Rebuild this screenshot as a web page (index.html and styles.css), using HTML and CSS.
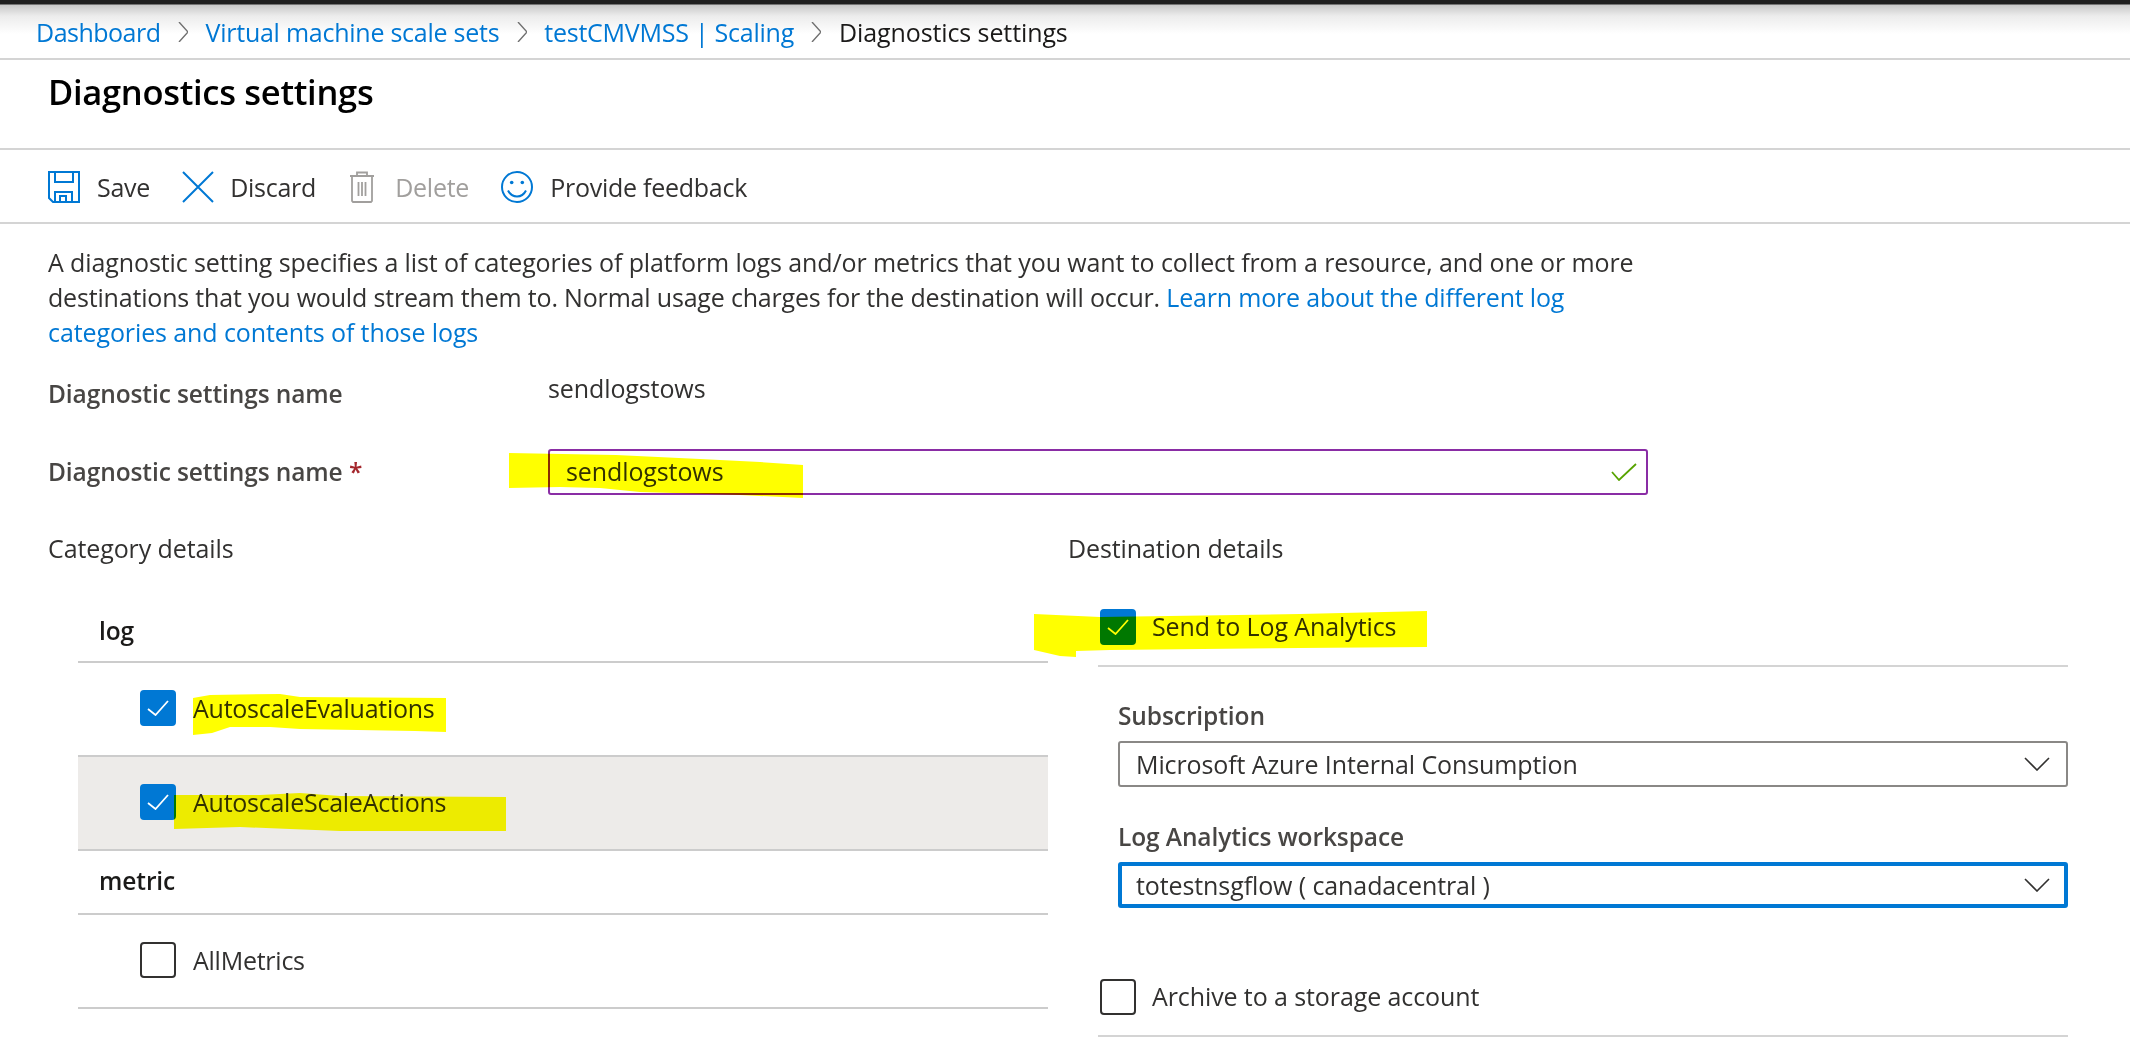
FILE: index.html
```html
<!DOCTYPE html>
<html lang="en">
<head>
    <meta charset="UTF-8">
    <meta name="viewport" content="width=device-width, initial-scale=1.0">
    <title>Diagnostics settings</title>
    <link rel="stylesheet" href="styles.css">
</head>
<body>
    <div class="breadcrumb">
        <a class="crumb c1">Dashboard</a>
        <svg class="crumb-sep" viewBox="0 0 10 20"><path d="M1 0l9 10-9 10"/></svg>
        <a class="crumb c2">Virtual machine scale sets</a>
        <svg class="crumb-sep" viewBox="0 0 10 20"><path d="M1 0l9 10-9 10"/></svg>
        <a class="crumb c3">testCMVMSS | Scaling</a>
        <svg class="crumb-sep" viewBox="0 0 10 20"><path d="M1 0l9 10-9 10"/></svg>
        <span class="crumb current">Diagnostics settings</span>
    </div>

    <div class="title-bar">
        <h1>Diagnostics settings</h1>
    </div>

    <div class="toolbar">
        <div class="tool tool-save">
            <svg class="icon" viewBox="0 0 32 32"><path d="M1 1h30v30H5l-4-4z"/><path d="M7 1v10h18V1"/><path d="M7 31V21h17v10M12 31v-6h6v6"/></svg>
            <span>Save</span>
        </div>
        <div class="tool tool-discard">
            <svg class="icon" viewBox="0 0 32 32"><path d="M1 1l30 30M31 1L1 31"/></svg>
            <span>Discard</span>
        </div>
        <div class="tool tool-delete disabled">
            <svg class="icon icon-trash" viewBox="0 0 26 32"><path d="M1 5h24M8 5V1.500h10V5M3 5v25l1 1h18l1-1V5M9.500 11v14M13 11v14M16.500 11v14"/></svg>
            <span>Delete</span>
        </div>
        <div class="tool">
            <svg class="icon" viewBox="0 0 32 32"><circle cx="16" cy="16" r="15"/><circle class="eye" cx="10.700" cy="11.500" r="1.800"/><circle class="eye" cx="21.300" cy="11.500" r="1.800"/><path d="M7 19.500c4 8 14 8 18 0"/></svg>
            <span>Provide feedback</span>
        </div>
    </div>

    <div class="content">
        <p class="intro">
            A diagnostic setting specifies a list of categories of platform logs and/or metrics that you want to collect from a resource, and one or more<br>
            <span class="tight">destinations that you would stream them to. Normal usage charges for the destination will occur. <a>Learn more about the different log</a></span><br>
            <a>categories and contents of those logs</a>
        </p>

        <div class="name-row">
            <div class="label">Diagnostic settings name</div>
            <div class="name-value">sendlogstows</div>
        </div>
        <div class="name-row input-row">
            <div class="label">Diagnostic settings name <span class="req">*</span></div>
            <div class="text-input">
                <span>sendlogstows</span>
                <svg class="valid" viewBox="0 0 26 18"><path d="M1 9l7 8L25 1"/></svg>
            </div>
        </div>

        <div class="columns">
            <div class="col">
                <div class="col-head">Category details</div>
                <div class="cat-table">
                    <div class="cat-group">log</div>
                    <div class="cat-row">
                        <span class="checkbox on"><svg viewBox="0 0 22 16"><path d="M1 9l7.500 6L21 1"/></svg></span>
                        <span class="cat-name">AutoscaleEvaluations</span>
                    </div>
                    <div class="cat-row hover">
                        <span class="checkbox on"><svg viewBox="0 0 22 16"><path d="M1 9l7.500 6L21 1"/></svg></span>
                        <span class="cat-name">AutoscaleScaleActions</span>
                    </div>
                    <div class="cat-group metric">metric</div>
                    <div class="cat-row">
                        <span class="checkbox"></span>
                        <span class="cat-name">AllMetrics</span>
                    </div>
                </div>
            </div>

            <div class="col">
                <div class="col-head">Destination details</div>
                <div class="dest">
                    <div class="dest-check first">
                        <span class="checkbox on"><svg viewBox="0 0 22 16"><path d="M1 9l7.500 6L21 1"/></svg></span>
                        <span>Send to Log Analytics</span>
                    </div>
                    <div class="dest-fields">
                        <div class="field-label">Subscription</div>
                        <div class="select">
                            <span>Microsoft Azure Internal Consumption</span>
                            <svg viewBox="0 0 26 14"><path d="M1 1l12 12L25 1"/></svg>
                        </div>
                        <div class="field-label second">Log Analytics workspace</div>
                        <div class="select focus">
                            <span>totestnsgflow ( canadacentral )</span>
                            <svg viewBox="0 0 26 14"><path d="M1 1l12 12L25 1"/></svg>
                        </div>
                    </div>
                    <div class="dest-check last">
                        <span class="checkbox"></span>
                        <span>Archive to a storage account</span>
                    </div>
                </div>
            </div>
        </div>
    </div>

    <!-- marker strokes drawn over the screenshot -->
    <svg class="marker" viewBox="0 0 2130 1041">
        <path d="M509 453L616 455L700 459L760 462L803 465V498L740 495L640 492L600 488L560 487L509 488z"/>
        <path d="M1034 614L1100 617L1300 614L1427 611V647L1300 648L1110 650L1076 651V657L1060 656L1034 650z"/>
        <path d="M193 698L210 695L280 694L300 697L446 698V732L415 731L300 729L270 727L230 727L212 733L193 735z"/>
        <path d="M174 795L260 795L300 793L340 796L506 797V831L340 831L290 829L240 827L174 829z"/>
    </svg>
</body>
</html>
```

FILE: styles.css
```css
* {
    box-sizing: border-box;
}
body {
    margin: 0;
    width: 2130px;
    height: 1041px;
    overflow: hidden;
    position: relative;
    background: #fff;
    color: #323130;
    font-family: "Open Sans", "Noto Sans", sans-serif;
    font-size: 25px;
    letter-spacing: -0.1px;
}
a {
    color: #0078d4;
}

.breadcrumb {
    height: 60px;
    padding: 6px 0 0 36px;
    display: flex;
    align-items: center;
    border-bottom: 2px solid #d4d4d4;
    background: linear-gradient(#1f1f1f 0, #1f1f1f 4px, #c8c8c8 5px, #ececec 16px, #fff 34px);
}
.crumb {
    white-space: nowrap;
}
.c1 {
    letter-spacing: -0.5px;
}
.c2,
.c3 {
    letter-spacing: -0.25px;
}
.crumb.current {
    color: #1b1a19;
}
.crumb-sep {
    width: 10px;
    height: 20px;
    margin: 0 17.500px;
    fill: none;
    stroke: #707070;
    stroke-width: 1.4;
}

.title-bar {
    height: 90px;
    padding: 10px 0 0 48px;
    border-bottom: 2px solid #d4d4d4;
}
h1 {
    margin: 0;
    font-size: 34.5px;
    line-height: 44px;
    font-weight: 600;
    letter-spacing: -0.3px;
    color: #000;
}

.toolbar {
    height: 74px;
    padding: 2px 0 0 48px;
    display: flex;
    align-items: center;
    border-bottom: 2px solid #d4d4d4;
    letter-spacing: -0.25px;
}
.tool {
    display: flex;
    align-items: center;
    gap: 17px;
}
.tool-save {
    margin-right: 32px;
}
.tool-discard {
    margin-right: 33px;
    gap: 16px;
}
.tool-delete {
    margin-right: 32px;
    gap: 20px;
}
.disabled {
    color: #a19f9d;
}
.icon {
    width: 32px;
    height: 32px;
    fill: none;
    stroke: #0078d4;
    stroke-width: 2;
}
.icon .eye {
    fill: #0078d4;
    stroke: none;
}
.icon-trash {
    width: 26px;
    stroke: #a19f9d;
    stroke-width: 1.8;
}

.content {
    padding: 21px 0 0 48px;
}
.intro {
    margin: 0;
    line-height: 35px;
    height: 107px;
}
.tight {
    letter-spacing: -0.18px;
}

.name-row {
    display: flex;
    margin-top: 22px;
    height: 36px;
}
.label {
    width: 500px;
    font-size: 24.5px;
    font-weight: 600;
    color: #484644;
    line-height: 36px;
    padding-top: 2px;
}
.name-value {
    line-height: 32px;
    margin-top: -2px;
}
.input-row {
    margin-top: 39px;
    height: 46px;
    align-items: center;
}
.input-row .label {
    padding-top: 0;
}
.req {
    color: #a4262c;
}
.text-input {
    width: 1100px;
    height: 46px;
    padding: 0 16px 2px;
    display: flex;
    align-items: center;
    justify-content: space-between;
    border: 2px solid #8a2da5;
    border-radius: 3px;
}
.valid {
    width: 26px;
    height: 18px;
    margin: 2px -7px 0 0;
    fill: none;
    stroke: #57a300;
    stroke-width: 1.8;
}

.columns {
    display: grid;
    grid-template-columns: 1000px 1000px;
    column-gap: 20px;
    margin-top: 37px;
}
.col-head {
    height: 34px;
    line-height: 32px;
    margin-bottom: 36px;
}

.cat-table {
    margin-left: 30px;
}
.cat-group {
    height: 61px;
    padding: 9px 0 0 21px;
    line-height: 40px;
    font-size: 24.5px;
    font-weight: 600;
    color: #1b1a19;
    border-bottom: 2px solid #ccc;
}
.cat-group.metric {
    height: 64px;
    padding-top: 10px;
}
.cat-row {
    height: 94px;
    padding: 0 0 2px 62px;
    display: flex;
    align-items: center;
    gap: 17px;
    border-bottom: 2px solid #ccc;
}
.cat-row.hover {
    background: #edebe9;
}
.cat-name {
    letter-spacing: -0.25px;
}
.checkbox {
    width: 36px;
    height: 36px;
    flex: none;
    display: flex;
    align-items: center;
    justify-content: center;
    border: 2px solid #323130;
    border-radius: 4px;
}
.checkbox.on {
    background: #0078d4;
    border-color: #0078d4;
}
.checkbox svg {
    width: 22px;
    height: 16px;
    fill: none;
    stroke: #fff;
    stroke-width: 1.8;
}

.dest {
    margin-left: 30px;
    width: 970px;
}
.dest-check {
    display: flex;
    align-items: flex-start;
    gap: 16px;
    padding: 7px 0 0 2px;
    border-bottom: 2px solid #d4d4d4;
    line-height: 34px;
}
.dest-check.first {
    height: 65px;
}
.dest-check.last {
    height: 58px;
    margin-top: 71px;
    padding-top: 0;
}
.dest-fields {
    padding: 33px 0 0 20px;
}
.field-label {
    height: 34px;
    line-height: 32px;
    margin-bottom: 7px;
    font-size: 24.5px;
    font-weight: 600;
    color: #484644;
}
.field-label.second {
    margin-top: 34px;
}
.select {
    width: 950px;
    height: 46px;
    padding: 0 16px;
    display: flex;
    align-items: center;
    justify-content: space-between;
    border: 2px solid #8a8886;
    border-radius: 3px;
}
.select.focus {
    border: 4px solid #0078d4;
    padding: 0 14px;
}
.select svg {
    width: 26px;
    height: 14px;
    fill: none;
    stroke: #323130;
    stroke-width: 1.6;
}

.marker {
    position: absolute;
    top: 0;
    left: 0;
    width: 2130px;
    height: 1041px;
    mix-blend-mode: multiply;
    pointer-events: none;
}
.marker path {
    fill: #ffff00;
}
```
